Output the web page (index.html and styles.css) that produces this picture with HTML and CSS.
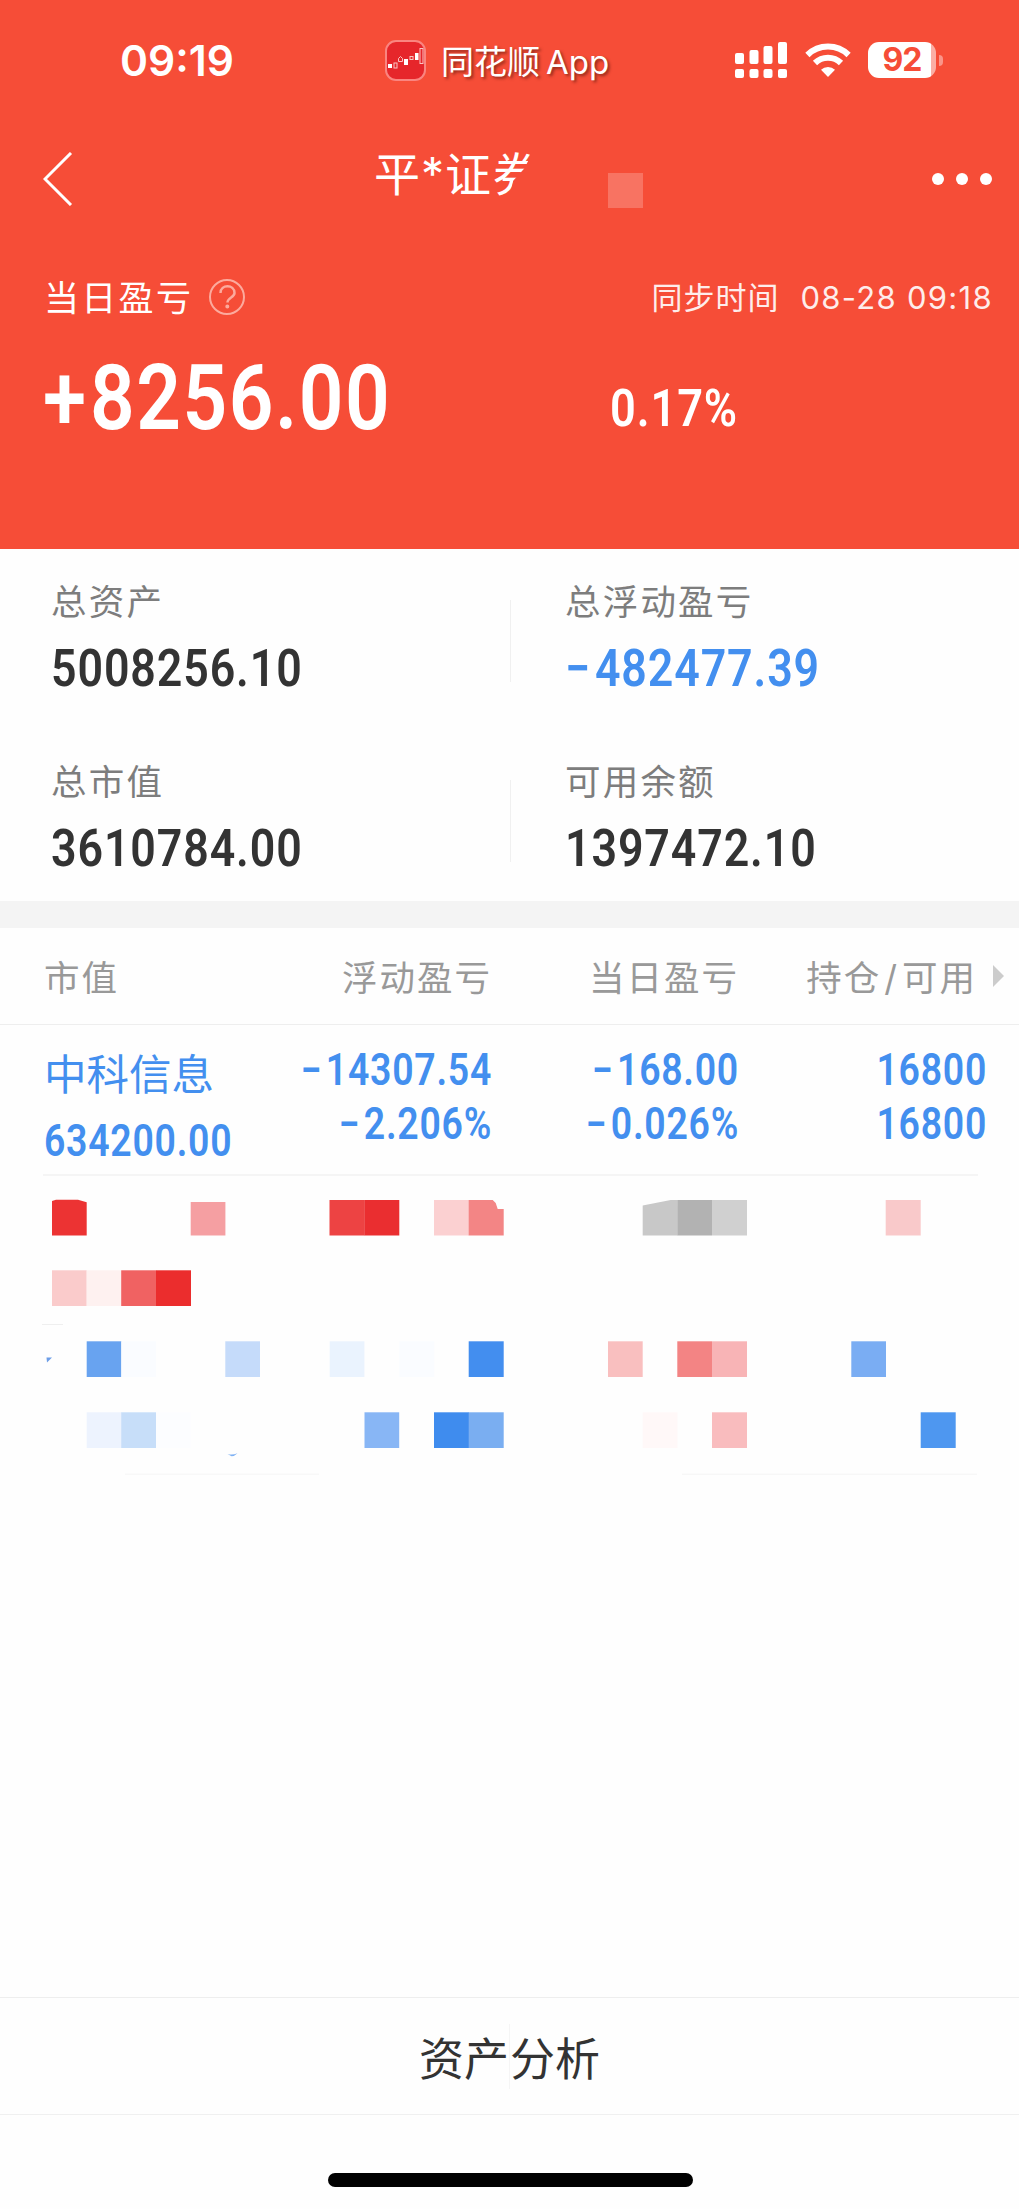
FILE: index.html
```html
<!DOCTYPE html>
<html lang="zh-CN">
<head>
    <meta charset="UTF-8">
    <meta name="viewport" content="width=device-width, initial-scale=1.0">
    <title>资产</title>
    <link rel="stylesheet" href="styles.css">
</head>
<body>
    <div class="header">
        <div class="status-bar">
            <div class="time">09:19</div>
            <div class="app-name">
                <svg class="app-icon" width="41" height="41" viewBox="0 0 41 41">
                    <rect x="1" y="1" width="39" height="39" rx="10" fill="#e6262b" stroke="#fa8580" stroke-width="2"/>
                    <g fill="#fff">
                        <rect x="3" y="24" width="4" height="4"/>
                        <rect x="19" y="19" width="4" height="6"/>
                        <rect x="30" y="13" width="3.500" height="7"/>
                    </g>
                    <g fill="none" stroke="#fbc4c2" stroke-width="1">
                        <rect x="9" y="23" width="3" height="5"/>
                        <path d="M13.500 21.500v-3l2-2 2 2v3z"/>
                        <rect x="25" y="16.500" width="3" height="3"/>
                        <rect x="35" y="8.500" width="3" height="15"/>
                    </g>
                </svg>
                <span>同花顺<span class="latin">App</span></span>
            </div>
            <div class="status-icons">
                <svg width="52" height="36" viewBox="0 0 52 36" fill="#fff">
                    <rect x="0" y="11" width="9" height="11" rx="2"/>
                    <rect x="14.500" y="8" width="9" height="14" rx="2"/>
                    <rect x="28.500" y="4" width="9" height="18" rx="2"/>
                    <rect x="43" y="0" width="9" height="22" rx="2"/>
                    <rect x="0" y="27" width="9" height="9" rx="2"/>
                    <rect x="14.500" y="27" width="9" height="9" rx="2"/>
                    <rect x="28.500" y="27" width="9" height="9" rx="2"/>
                    <rect x="43" y="27" width="9" height="9" rx="2"/>
                </svg>
                <svg class="wifi" width="46" height="34" viewBox="0 0 46 34">
                    <g fill="none" stroke="#fff" stroke-width="6">
                        <path d="M2.400 12A29.500 29.500 0 0 1 43.600 12"/>
                        <path d="M10 20A18.500 18.500 0 0 1 36 20"/>
                    </g>
                    <path d="M23 34l-7-7.300a10.500 10.500 0 0 1 14 0z" fill="#fff"/>
                </svg>
                <div class="battery"><span>92</span></div>
                <div class="battery-tip"></div>
            </div>
        </div>

        <div class="nav">
            <svg class="back" width="30" height="54" viewBox="0 0 30 54">
                <path d="M28 1L2 27l26 26" fill="none" stroke="#fff" stroke-width="3"/>
            </svg>
            <div class="nav-title">平<span class="star">*</span>证<span class="cut">券</span></div>
            <div class="mask"></div>
            <div class="more"><i></i><i></i><i></i></div>
        </div>

        <div class="today-head">
            <span class="today-label">当日盈亏</span>
            <svg width="38" height="38" viewBox="0 0 38 38" fill="none" stroke="#fcaa9d" stroke-width="2">
                <circle cx="19" cy="19" r="17"/>
                <path d="M12.500 15c0-9 14-9 14 0 0 4.500-7 4.500-7 9.500" stroke-width="2.500"/>
                <circle cx="19.300" cy="28.500" r="1" fill="#fcaa9d"/>
            </svg>
            <span class="sync">同步时间<span class="sync-time">08-28 09:18</span></span>
        </div>
        <div class="today-values">
            <span class="num profit"><span class="sign">+</span>8256.00</span>
            <span class="num rate">0.17%</span>
        </div>
    </div>

    <div class="summary">
        <div class="cell">
            <div class="label">总资产</div>
            <div class="num value">5008256.10</div>
        </div>
        <div class="cell right">
            <div class="label">总浮动盈亏</div>
            <div class="num value blue"><span class="sign">−</span>482477.39</div>
        </div>
        <div class="cell">
            <div class="label">总市值</div>
            <div class="num value">3610784.00</div>
        </div>
        <div class="cell right">
            <div class="label">可用余额</div>
            <div class="num value">1397472.10</div>
        </div>
    </div>

    <div class="table-head">
        <span class="col1">市值</span>
        <span class="col2">浮动盈亏</span>
        <span class="col3">当日盈亏</span>
        <span class="col4">持仓<b>/</b>可用</span>
        <i class="arrow"></i>
    </div>
    <div class="stock">
        <div class="col1">
            <div class="stock-name">中科信息</div>
            <div class="num">634200.00</div>
        </div>
        <div class="col2">
            <div class="num"><span class="sign">−</span>14307.54</div>
            <div class="num"><span class="sign">−</span>2.206%</div>
        </div>
        <div class="col3">
            <div class="num"><span class="sign">−</span>168.00</div>
            <div class="num"><span class="sign">−</span>0.026%</div>
        </div>
        <div class="col4">
            <div class="num">16800</div>
            <div class="num">16800</div>
        </div>
    </div>

    <!-- hidden holdings -->
    <svg class="mosaic" width="1019" height="300" viewBox="0 1180 1019 300">
        <path d="M52 1201l4-1.300h22l8.700 2.600v33.200H52z" fill="#ec3333"/>
        <rect x="190.700" y="1202" width="34.700" height="33.500" fill="#f59fa2"/>
        <rect x="329.500" y="1200" width="35" height="35.500" fill="#ed4343"/>
        <rect x="364.300" y="1200" width="35" height="35.500" fill="#ea2e30"/>
        <rect x="434" y="1200" width="35" height="35.500" fill="#fbd0d1"/>
        <path d="M468.700 1200h24l3 3 2 6h6v26.500h-35z" fill="#f38585"/>
        <path d="M642.700 1205.500l28-5.500h6.700v35.500h-34.700z" fill="#c8c8c8"/>
        <rect x="677.300" y="1200" width="34.700" height="35.500" fill="#b2b2b2"/>
        <rect x="712" y="1200" width="35" height="35.500" fill="#d0d0d0"/>
        <rect x="885.700" y="1200" width="35" height="35.500" fill="#f9c9ca"/>

        <rect x="52" y="1270.300" width="34.700" height="35.700" fill="#facbcb"/>
        <rect x="86.700" y="1270.300" width="34.700" height="35.700" fill="#fef1f0"/>
        <rect x="121.200" y="1270.300" width="35" height="35.700" fill="#f06262"/>
        <rect x="156" y="1270.300" width="35" height="35.700" fill="#eb2d2d"/>
        <rect x="42" y="1324" width="21" height="1" fill="#efefef"/>

        <path d="M46.500 1357.500h5.500l-5 5z" fill="#6d9ee8"/>
        <rect x="86.700" y="1341.300" width="34.700" height="35.700" fill="#68a3f0"/>
        <rect x="121.300" y="1341.300" width="34.700" height="35.700" fill="#fafcff"/>
        <rect x="225.300" y="1341.300" width="34.700" height="35.700" fill="#c5dbfa"/>
        <rect x="329.700" y="1341.300" width="34.700" height="35.700" fill="#eaf3fe"/>
        <rect x="399.300" y="1341.300" width="35" height="35.700" fill="#fafcff"/>
        <rect x="468.700" y="1341.300" width="35" height="35.700" fill="#438eef"/>
        <rect x="608" y="1341.300" width="34.700" height="35.700" fill="#f9bfbf"/>
        <rect x="677.300" y="1341.300" width="34.700" height="35.700" fill="#f38484"/>
        <rect x="712" y="1341.300" width="35" height="35.700" fill="#f8b4b6"/>
        <rect x="851.300" y="1341.300" width="34.700" height="35.700" fill="#7aadf3"/>

        <rect x="86.700" y="1412.300" width="34.700" height="35.700" fill="#edf3fe"/>
        <rect x="121.200" y="1412.300" width="34.800" height="35.700" fill="#c7def9"/>
        <rect x="156" y="1412.300" width="34.700" height="35.700" fill="#fcfdff"/>
        <rect x="364.500" y="1412.300" width="34.700" height="35.700" fill="#88b6f5"/>
        <rect x="434" y="1412.300" width="35" height="35.700" fill="#3f8cee"/>
        <rect x="468.700" y="1412.300" width="35" height="35.700" fill="#7aaef1"/>
        <rect x="642.700" y="1412.300" width="34.700" height="35.700" fill="#fff8f8"/>
        <rect x="712" y="1412.300" width="35" height="35.700" fill="#f9bcbe"/>
        <rect x="920.700" y="1412.300" width="35" height="35.700" fill="#4e97f0"/>
        <path d="M227.500 1454q5 1.500 10-.800-3 3-6 3z" fill="#7fb1f3"/>
        <rect x="125" y="1473.500" width="194" height="1.500" fill="#f8f8f8"/>
        <rect x="682" y="1473.500" width="295" height="1.500" fill="#f7f7f7"/>
    </svg>

    <div class="footer">
        <div class="analysis"><span>资产</span><span>分析</span></div>
        <div class="home-bar"></div>
    </div>
</body>
</html>
```
FILE: styles.css
```css
* {
    box-sizing: border-box;
}
body {
    margin: 0;
    width: 1019px;
    height: 2209px;
    display: flex;
    flex-direction: column;
    background: #fefefe;
    color: #333;
    font-family: Inter, "Noto Sans CJK SC", sans-serif;
}
svg {
    display: block;
    flex: none;
}
/* narrow digits */
.num {
    font-family: Roboto, sans-serif;
    font-weight: 600;
    letter-spacing: 0.02em;
    white-space: nowrap;
    transform: scaleX(0.86);
    transform-origin: left center;
}
.sign {
    margin-right: 0.09em;
}
.blue {
    color: #438fef;
}

.header {
    height: 549px;
    background: #f64d37;
    color: #fff;
}
.status-bar {
    height: 120px;
    display: flex;
    align-items: center;
    padding-left: 120px;
}
.time {
    width: 265px;
    font-size: 42.5px;
    font-weight: 600;
}
.app-name {
    width: 350px;
    display: flex;
    align-items: center;
    gap: 15px;
    font-size: 33px;
    text-shadow: 2px 2px 3px rgba(80, 20, 10, 0.6);
}
.latin {
    margin-left: 6px;
}
.status-icons {
    display: flex;
    align-items: center;
}
.wifi {
    margin-left: 18px;
}
.battery {
    width: 68px;
    height: 36px;
    margin-left: 17px;
    border-radius: 11px;
    background: linear-gradient(to right, #fff 63px, #fbaea4 63px);
    color: #f64d37;
    font-size: 32px;
    font-weight: 700;
    line-height: 36px;
    letter-spacing: -1px;
    text-align: center;
}
.battery-tip {
    width: 4px;
    height: 11px;
    margin-left: 3px;
    border-radius: 0 5px 5px 0;
    background: #fa9589;
}

.nav {
    height: 120px;
    display: flex;
    align-items: flex-start;
    padding-top: 32px;
}
.back {
    margin-left: 43px;
}
.nav-title {
    width: 233px;
    margin-left: 301px;
    margin-top: -12px;
    font-size: 46px;
    line-height: 68px;
    white-space: nowrap;
}
.star {
    display: inline-block;
    width: 25px;
    text-align: center;
}
.cut {
    display: inline-block;
    margin-left: 2px;
    clip-path: polygon(0 0, 100% 0, 68% 42%, 44% 60%, 30% 100%, 0 100%);
}
.mask {
    width: 35px;
    height: 35px;
    margin-top: 21px;
    margin-left: 1px;
    background: #f87362;
}
.more {
    display: flex;
    gap: 12px;
    margin-left: 289px;
    margin-top: 21px;
}
.more i {
    width: 12px;
    height: 12px;
    border-radius: 50%;
    background: #fff;
}

.today-head {
    height: 116px;
    display: flex;
    align-items: center;
    padding: 0 26px 2px 44px;
}
.today-label {
    width: 164px;
    padding-bottom: 4px;
    font-size: 35px;
    letter-spacing: 2.3px;
}
.sync {
    margin-left: auto;
    padding-bottom: 4px;
    font-size: 31px;
    letter-spacing: 1px;
    opacity: 0.9;
}
.sync-time {
    margin-left: 21px;
    letter-spacing: 1.3px;
}
.today-values {
    display: flex;
    height: 90px;
}
.profit {
    width: 567px;
    margin-left: 43px;
    font-size: 91px;
    line-height: 84px;
}
.profit .sign {
    margin-right: 0.03em;
}
.rate {
    font-size: 52.5px;
    line-height: 104px;
}

.summary {
    height: 379px;
    display: grid;
    grid-template-columns: 511px 508px;
    grid-template-rows: 180px 172px;
    border-bottom: 27px solid #f4f4f4;
    background: #fefefe;
}
.cell {
    padding-left: 51px;
    padding-top: 29px;
    background: linear-gradient(#f0f0f0, #f0f0f0) right 51px / 1px 82px no-repeat;
}
.right {
    padding-left: 54px;
    background: none;
}
.label {
    font-size: 35.5px;
    line-height: 50px;
    letter-spacing: 2.2px;
    color: #7d7d7d;
}
.value {
    font-size: 52px;
    line-height: 82px;
}

.table-head {
    height: 97px;
    display: flex;
    align-items: center;
    border-bottom: 1px solid #eee;
    padding: 0 0 2px 44px;
    color: #999;
    font-size: 35.5px;
    letter-spacing: 2px;
}
.table-head b {
    font-weight: 400;
    margin: 0 3px;
}
.col1 {
    width: 210px;
    flex: none;
}
.col2 {
    width: 238px;
    flex: none;
    text-align: right;
}
.col3 {
    width: 247px;
    flex: none;
    text-align: right;
}
.col4 {
    width: 238px;
    flex: none;
    text-align: right;
}
.arrow {
    margin-left: 16px;
    margin-top: 2px;
    border-left: 11px solid #ccc;
    border-top: 11px solid transparent;
    border-bottom: 11px solid transparent;
}
.stock {
    height: 151px;
    margin: 0 41px 0 43px;
    border-bottom: 2px solid #f5f5f5;
    display: flex;
    padding-top: 19px;
    color: #438fef;
}
.stock .num {
    font-size: 43.5px;
    line-height: 54px;
}
.stock .col1 .num {
    margin-left: 1px;
}
.stock .col2 .num, .stock .col3 .num, .stock .col4 .num {
    transform-origin: right center;
    margin-right: -1px;
}
.stock .col4 {
    width: 248px;
}
.stock-name {
    margin-left: 1px;
    font-size: 42.5px;
    line-height: 62px;
    margin-bottom: 9px;
}
.mosaic {
    margin-top: 4px;
}

.footer {
    margin-top: auto;
    height: 212px;
    border-top: 1px solid #eee;
}
.analysis {
    height: 117px;
    display: flex;
    justify-content: center;
    align-items: center;
    border-bottom: 1px solid #f0f0f0;
    font-size: 45px;
}
.analysis span + span {
    border-left: 1px solid #f5f5f5;
}
.home-bar {
    width: 365px;
    height: 14px;
    margin: 58px auto 0 328px;
    border-radius: 7px;
    background: #000;
}
```
